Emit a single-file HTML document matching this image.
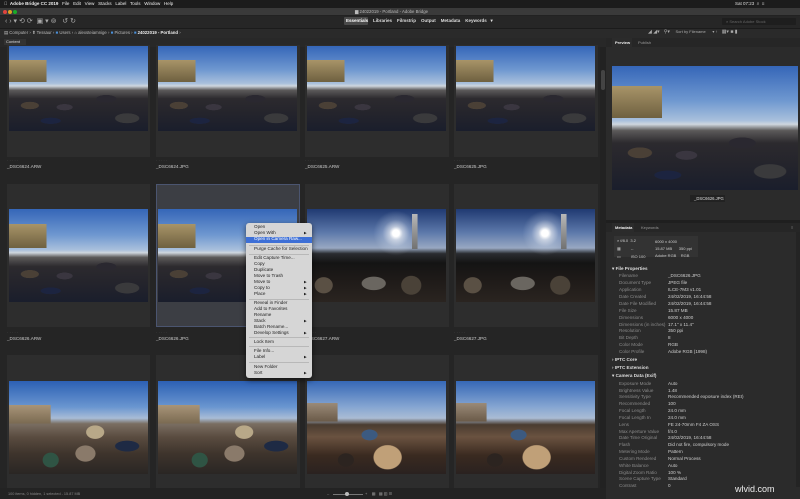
<!DOCTYPE html>
<html><head><meta charset="utf-8"><style>
*{margin:0;padding:0;box-sizing:border-box}
body{width:800px;height:499px;overflow:hidden;background:#232323;font-family:"Liberation Sans",sans-serif;color:#ccc;position:relative}
.a{position:absolute}
.t{position:absolute;font-size:4.6px;white-space:nowrap;line-height:1}
.cell{position:absolute;background:#2d2d2d}
.img{position:absolute}
.cliff{background:
 radial-gradient(ellipse 9% 6% at 15% 70%,#4a4036 0 70%,transparent 75%),
 radial-gradient(ellipse 8% 5% at 40% 72%,#3a3640 0 70%,transparent 75%),
 radial-gradient(ellipse 10% 6% at 70% 62%,#2a2830 0 70%,transparent 75%),
 radial-gradient(ellipse 12% 8% at 85% 85%,#3a3a3c 0 70%,transparent 75%),
 radial-gradient(ellipse 10% 5% at 30% 88%,#1c2440 0 70%,transparent 75%),
 linear-gradient(to bottom,#a89468,#6e6040) 0 22%/27% 26% no-repeat,
 linear-gradient(to bottom,#3566b8 0%,#6f98d0 28%,#a9c0dc 44%,#cfd6de 47%,#5c5a5a 52%,#2c2a2e 62%,#24242c 80%,#1a1e2c 100%)}
.light{background:
 linear-gradient(#b8b8b8,#707070) 79% 8%/4% 38% no-repeat,
 radial-gradient(circle at 64% 26%,#fff 0 3%,rgba(255,255,255,.6) 6%,rgba(220,230,245,.25) 12%,transparent 20%),
 radial-gradient(ellipse 9% 12% at 12% 82%,#5a5044 0 70%,transparent 75%),
 radial-gradient(ellipse 10% 14% at 75% 82%,#4a4238 0 70%,transparent 75%),
 radial-gradient(ellipse 12% 10% at 48% 80%,#6a6660 0 70%,transparent 75%),
 linear-gradient(to bottom,#203a72 0%,#5c78aa 25%,#98a8c2 42%,#2a2c30 48%,#141414 58%,#1e1a18 75%,#2a2420 100%)}
.peb{background:
 radial-gradient(ellipse 8% 11% at 30% 85%,#2f5444 0 70%,transparent 75%),
 radial-gradient(ellipse 10% 12% at 55% 78%,#8a7a6a 0 70%,transparent 75%),
 radial-gradient(ellipse 9% 10% at 62% 55%,#b8a888 0 70%,transparent 75%),
 radial-gradient(ellipse 12% 8% at 85% 70%,#1e2a44 0 70%,transparent 75%),
 linear-gradient(to bottom,#a89478,#7a6a52) 0 32%/30% 20% no-repeat,
 linear-gradient(to bottom,#2c60b4 0%,#6a96d0 28%,#a8bcd6 40%,#7a6e62 46%,#5a4c40 60%,#3e342c 78%,#2a2624 100%)}
.peb2{background:
 radial-gradient(ellipse 14% 18% at 58% 82%,#c0a078 0 70%,transparent 75%),
 radial-gradient(ellipse 8% 10% at 28% 85%,#2c2420 0 70%,transparent 75%),
 radial-gradient(ellipse 8% 8% at 45% 58%,#3c5a80 0 70%,transparent 75%),
 linear-gradient(to bottom,#9a8a78,#6a5a48) 0 30%/22% 20% no-repeat,
 linear-gradient(to bottom,#3668b6 0%,#86a6d2 28%,#aabcd4 40%,#4a3c30 47%,#6a5240 60%,#3a2a20 80%,#2a2220 100%)}
.menu{background:#d6d6d6;border-radius:3px;box-shadow:0 2px 6px rgba(0,0,0,.6)}
.menu .t{color:#222;font-size:4.6px;left:8px}
.menu .ar{left:58px;font-size:3.5px}
.sep{position:absolute;left:3px;right:3px;height:1px;background:#b8b8b8}
.m .t{color:#8a8a8a;left:12px}
.m .v{color:#cfcfcf;left:61px}
</style></head><body>
<div class="a" style="left:0;top:0;width:800px;height:8px;background:#1c1c1c"></div>
<div class="t" style="left:4px;top:2px;color:#eee;font-size:4.5px">&#63743;&nbsp;&nbsp;<b>Adobe Bridge CC 2019</b>&nbsp;&nbsp; File &nbsp; Edit &nbsp; View &nbsp; Stacks &nbsp; Label &nbsp; Tools &nbsp; Window &nbsp; Help</div>
<div class="t" style="left:735px;top:2px;color:#ddd;font-size:4.5px">Sat 07:23 &nbsp;⌕ &nbsp;≡</div>
<div class="a" style="left:0;top:8px;width:800px;height:8px;background:#3a3a3a;border-bottom:1px solid #222"></div>
<div class="a" style="left:3px;top:10px;width:4px;height:4px;border-radius:50%;background:#e0443e"></div>
<div class="a" style="left:8px;top:10px;width:4px;height:4px;border-radius:50%;background:#dea123"></div>
<div class="a" style="left:13px;top:10px;width:4px;height:4px;border-radius:50%;background:#1aab29"></div>
<div class="t" style="left:355px;top:10px;color:#bbb;font-size:4.3px">▆ 24022019 - Portland - Adobe Bridge</div>
<div class="a" style="left:0;top:16px;width:800px;height:12px;background:#262626"></div>
<div class="t" style="left:5px;top:18px;color:#aaa;font-size:7px">‹ › ▾ ⟲ ⟳ &nbsp;▣ ▾ ⊚ &nbsp; ↺ ↻</div>
<div class="a" style="left:344px;top:17px;width:24px;height:8px;background:#4a4a4a;border-radius:1px"></div>
<div class="t" style="left:346px;top:19px;color:#fff;font-size:4.5px"><b>Essentials</b></div>
<div class="t" style="left:373px;top:19px;color:#ddd;font-size:4.5px"><b>Libraries &nbsp;&nbsp; Filmstrip &nbsp;&nbsp; Output &nbsp;&nbsp; Metadata &nbsp;&nbsp; Keywords &nbsp; ▾</b></div>
<div class="a" style="left:722px;top:18px;width:74px;height:7px;background:#1e1e1e;border-radius:1px"></div>
<div class="t" style="left:726px;top:19.5px;color:#666;font-size:4px">⌕ Search Adobe Stock</div>
<div class="a" style="left:0;top:28px;width:800px;height:10px;background:#2a2a2a;border-top:1px solid #1b1b1b"></div>
<div class="t" style="left:4px;top:31px;color:#bbb;font-size:4.3px">▤ Computer › ⬆ Tessaur › <span style="color:#4a90d9">■</span> Users › ⌂ alexsteiamnige › <span style="color:#4a90d9">■</span> Pictures › <span style="color:#4a90d9">■</span> <b style="color:#eee">24022019 - Portland</b> ›</div>
<div class="t" style="left:648px;top:30px;color:#aaa;font-size:5px">◢ ◢▾ &nbsp; ⚲▾ &nbsp;&nbsp; <span style="font-size:4px">Sort by Filename &nbsp;&nbsp;&nbsp;&nbsp; ▾ ↑</span> &nbsp; ▦▾ ■ ▮</div>
<div class="a" style="left:0;top:38px;width:606px;height:9px;background:#282828"></div>
<div class="a" style="left:4px;top:39px;width:22px;height:6px;background:#333"></div>
<div class="t" style="left:6px;top:40px;color:#ddd;font-size:4px">Content</div>
<div class="a" style="left:0;top:47px;width:604px;height:441px;background:#252525"></div>
<div class="a" style="left:600px;top:47px;width:6px;height:441px;background:#222"></div>
<div class="a" style="left:601px;top:70px;width:4px;height:20px;background:#444;border-radius:2px"></div>

<div class="cell" style="left:7px;top:45px;width:143px;height:112px"></div>
<div class="cell" style="left:156px;top:45px;width:144px;height:112px"></div>
<div class="cell" style="left:305px;top:45px;width:144px;height:112px"></div>
<div class="cell" style="left:454px;top:45px;width:144px;height:112px"></div>
<div class="img cliff" style="left:9px;top:46px;width:139px;height:85px"></div>
<div class="img cliff" style="left:158px;top:46px;width:139px;height:85px"></div>
<div class="img cliff" style="left:307px;top:46px;width:139px;height:85px"></div>
<div class="img cliff" style="left:456px;top:46px;width:139px;height:85px"></div>
<div class="t" style="left:7px;top:159px;color:#555;font-size:4px">· · · · ·</div>
<div class="t" style="left:7px;top:165px;color:#ccc">_DSC6624.ARW</div>
<div class="t" style="left:156px;top:159px;color:#555;font-size:4px">· · · · ·</div>
<div class="t" style="left:156px;top:165px;color:#ccc">_DSC6624.JPG</div>
<div class="t" style="left:305px;top:159px;color:#555;font-size:4px">· · · · ·</div>
<div class="t" style="left:305px;top:165px;color:#ccc">_DSC6625.ARW</div>
<div class="t" style="left:454px;top:159px;color:#555;font-size:4px">· · · · ·</div>
<div class="t" style="left:454px;top:165px;color:#ccc">_DSC6625.JPG</div>

<div class="cell" style="left:7px;top:184px;width:143px;height:143px"></div>
<div class="cell" style="left:156px;top:184px;width:144px;height:143px;background:#3c3e44;border:1px solid #4b5570"></div>
<div class="cell" style="left:305px;top:184px;width:144px;height:143px"></div>
<div class="cell" style="left:454px;top:184px;width:144px;height:143px"></div>
<div class="img cliff" style="left:9px;top:209px;width:139px;height:93px"></div>
<div class="img cliff" style="left:158px;top:209px;width:139px;height:93px"></div>
<div class="img light" style="left:307px;top:209px;width:139px;height:93px"></div>
<div class="img light" style="left:456px;top:209px;width:139px;height:93px"></div>
<div class="t" style="left:7px;top:331px;color:#555;font-size:4px">· · · · ·</div>
<div class="t" style="left:7px;top:337px;color:#ccc">_DSC6626.ARW</div>
<div class="t" style="left:156px;top:331px;color:#555;font-size:4px">· · · · ·</div>
<div class="t" style="left:156px;top:337px;color:#ccc">_DSC6626.JPG</div>
<div class="t" style="left:305px;top:331px;color:#555;font-size:4px">· · · · ·</div>
<div class="t" style="left:305px;top:337px;color:#ccc">_DSC6627.ARW</div>
<div class="t" style="left:454px;top:331px;color:#555;font-size:4px">· · · · ·</div>
<div class="t" style="left:454px;top:337px;color:#ccc">_DSC6627.JPG</div>

<div class="cell" style="left:7px;top:355px;width:143px;height:133px"></div>
<div class="cell" style="left:156px;top:355px;width:144px;height:133px"></div>
<div class="cell" style="left:305px;top:355px;width:144px;height:133px"></div>
<div class="cell" style="left:454px;top:355px;width:144px;height:133px"></div>
<div class="img peb" style="left:9px;top:381px;width:139px;height:93px"></div>
<div class="img peb" style="left:158px;top:381px;width:139px;height:93px"></div>
<div class="img peb2" style="left:307px;top:381px;width:139px;height:93px"></div>
<div class="img peb2" style="left:456px;top:381px;width:139px;height:93px"></div>

<div class="a" style="left:0;top:488px;width:606px;height:11px;background:#232323"></div>
<div class="t" style="left:8px;top:493px;color:#888;font-size:3.8px">100 items, 0 hidden, 1 selected - 15.87 MB</div>
<div class="a" style="left:333px;top:494px;width:30px;height:1px;background:#777"></div>
<div class="a" style="left:345px;top:492px;width:4px;height:4px;border-radius:50%;background:#bbb"></div>
<div class="t" style="left:327px;top:492px;color:#999;font-size:4px">–</div>
<div class="t" style="left:365px;top:492px;color:#999;font-size:4px">+ &nbsp;&nbsp; ▦ &nbsp; ▦ ▥ ☰</div>

<div class="a" style="left:606px;top:38px;width:194px;height:461px;background:#2b2b2b"></div>
<div class="a" style="left:606px;top:38px;width:194px;height:9px;background:#262626"></div>
<div class="a" style="left:612px;top:38px;width:20px;height:9px;background:#2b2b2b"></div>
<div class="t" style="left:615px;top:40.5px;color:#eee;font-size:4px"><b>Preview</b></div>
<div class="t" style="left:638px;top:40.5px;color:#999;font-size:4px">Publish</div>
<div class="img cliff" style="left:612px;top:66px;width:186px;height:124px"></div>
<div class="a" style="left:690px;top:195px;width:35px;height:7px;background:#222"></div>
<div class="t" style="left:694px;top:197px;color:#ddd;font-size:4.2px">_DSC6626.JPG</div>
<div class="a" style="left:606px;top:220px;width:194px;height:3px;background:#1f1f1f"></div>
<div class="a" style="left:606px;top:223px;width:194px;height:9px;background:#262626"></div>
<div class="a" style="left:612px;top:223px;width:22px;height:9px;background:#2b2b2b"></div>
<div class="t" style="left:615px;top:226px;color:#eee;font-size:4px"><b>Metadata</b></div>
<div class="t" style="left:641px;top:226px;color:#999;font-size:4px">Keywords</div>
<div class="t" style="left:791px;top:226px;color:#888;font-size:4px">≡</div>
<div class="a" style="left:614px;top:236px;width:84px;height:21px;background:#333"></div>
<div class="t" style="left:617px;top:239px;color:#ccc;font-size:4px">⌕ f/8.0 &nbsp;3.2<br><br>▦ &nbsp;&nbsp;&nbsp;&nbsp;&nbsp;&nbsp;&nbsp; --<br><br>▭ &nbsp;&nbsp;&nbsp;&nbsp;&nbsp;&nbsp;&nbsp; ISO 100</div>
<div class="t" style="left:655px;top:239px;color:#ccc;font-size:4px;line-height:6.8px">6000 x 4000<br>15.87 MB &nbsp;&nbsp;&nbsp;&nbsp; 350 ppi<br>Adobe RGB &nbsp;&nbsp; RGB</div>
<div class="a" style="left:796px;top:232px;width:4px;height:255px;background:#242424"></div>

<div class="m">
<div class="t" style="left:612px;top:267px;color:#ddd"><b>▾ File Properties</b></div>
<div class="t" style="top:274px;left:619px">Filename</div><div class="v t" style="top:274px;left:668px">_DSC6626.JPG</div>
<div class="t" style="top:281px;left:619px">Document Type</div><div class="v t" style="top:281px;left:668px">JPEG file</div>
<div class="t" style="top:288px;left:619px">Application</div><div class="v t" style="top:288px;left:668px">ILCE-7M3 v1.01</div>
<div class="t" style="top:295px;left:619px">Date Created</div><div class="v t" style="top:295px;left:668px">24/02/2019, 16:44:58</div>
<div class="t" style="top:301.5px;left:619px">Date File Modified</div><div class="v t" style="top:301.5px;left:668px">24/02/2019, 16:44:58</div>
<div class="t" style="top:308.5px;left:619px">File Size</div><div class="v t" style="top:308.5px;left:668px">15.87 MB</div>
<div class="t" style="top:315.5px;left:619px">Dimensions</div><div class="v t" style="top:315.5px;left:668px">6000 x 4000</div>
<div class="t" style="top:322.5px;left:619px">Dimensions (in inches)</div><div class="v t" style="top:322.5px;left:668px">17.1" x 11.4"</div>
<div class="t" style="top:329px;left:619px">Resolution</div><div class="v t" style="top:329px;left:668px">350 ppi</div>
<div class="t" style="top:336px;left:619px">Bit Depth</div><div class="v t" style="top:336px;left:668px">8</div>
<div class="t" style="top:343px;left:619px">Color Mode</div><div class="v t" style="top:343px;left:668px">RGB</div>
<div class="t" style="top:349.5px;left:619px">Color Profile</div><div class="v t" style="top:349.5px;left:668px">Adobe RGB (1998)</div>
<div class="t" style="left:612px;top:357.5px;color:#ddd"><b>› IPTC Core</b></div>
<div class="t" style="left:612px;top:366px;color:#ddd"><b>› IPTC Extension</b></div>
<div class="t" style="left:612px;top:374px;color:#ddd"><b>▾ Camera Data (Exif)</b></div>
<div class="t" style="top:381.5px;left:619px">Exposure Mode</div><div class="v t" style="top:381.5px;left:668px">Auto</div>
<div class="t" style="top:388.5px;left:619px">Brightness Value</div><div class="v t" style="top:388.5px;left:668px">1.48</div>
<div class="t" style="top:395px;left:619px">Sensitivity Type</div><div class="v t" style="top:395px;left:668px">Recommended exposure index (REI)</div>
<div class="t" style="top:402px;left:619px">Recommended</div><div class="v t" style="top:402px;left:668px">100</div>
<div class="t" style="top:409px;left:619px">Focal Length</div><div class="v t" style="top:409px;left:668px">24.0 mm</div>
<div class="t" style="top:415.5px;left:619px">Focal Length In</div><div class="v t" style="top:415.5px;left:668px">24.0 mm</div>
<div class="t" style="top:422.5px;left:619px">Lens</div><div class="v t" style="top:422.5px;left:668px">FE 24-70mm F4 ZA OSS</div>
<div class="t" style="top:429.5px;left:619px">Max Aperture Value</div><div class="v t" style="top:429.5px;left:668px">f/4.0</div>
<div class="t" style="top:436px;left:619px">Date Time Original</div><div class="v t" style="top:436px;left:668px">24/02/2019, 16:44:58</div>
<div class="t" style="top:443px;left:619px">Flash</div><div class="v t" style="top:443px;left:668px">Did not fire, compulsory mode</div>
<div class="t" style="top:450px;left:619px">Metering Mode</div><div class="v t" style="top:450px;left:668px">Pattern</div>
<div class="t" style="top:456.5px;left:619px">Custom Rendered</div><div class="v t" style="top:456.5px;left:668px">Normal Process</div>
<div class="t" style="top:463.5px;left:619px">White Balance</div><div class="v t" style="top:463.5px;left:668px">Auto</div>
<div class="t" style="top:470.5px;left:619px">Digital Zoom Ratio</div><div class="v t" style="top:470.5px;left:668px">100 %</div>
<div class="t" style="top:477px;left:619px">Scene Capture Type</div><div class="v t" style="top:477px;left:668px">Standard</div>
<div class="t" style="top:484px;left:619px">Contrast</div><div class="v t" style="top:484px;left:668px">0</div>
</div>
<div class="t" style="left:735px;top:485px;color:#eee;font-size:9px">wlvid.com</div>

<div class="a menu" style="left:246px;top:223px;width:66px;height:155px">
<div class="t" style="top:2px">Open</div>
<div class="t" style="top:8px">Open With</div><div class="t ar" style="top:9px">▶</div>
<div class="a" style="left:0;top:13.5px;width:66px;height:6px;background:#3d6fd6"></div>
<div class="t" style="top:14.2px;color:#fff">Open in Camera Raw...</div>
<div class="sep" style="top:21.5px"></div>
<div class="t" style="top:24px">Purge Cache for Selection</div>
<div class="sep" style="top:31px"></div>
<div class="t" style="top:33px">Edit Capture Time...</div>
<div class="t" style="top:39px">Copy</div>
<div class="t" style="top:45px">Duplicate</div>
<div class="t" style="top:51px">Move to Trash</div>
<div class="t" style="top:57px">Move to</div><div class="t ar" style="top:58px">▶</div>
<div class="t" style="top:63px">Copy to</div><div class="t ar" style="top:64px">▶</div>
<div class="t" style="top:69px">Place</div><div class="t ar" style="top:70px">▶</div>
<div class="sep" style="top:75.5px"></div>
<div class="t" style="top:78px">Reveal in Finder</div>
<div class="t" style="top:84px">Add to Favorites</div>
<div class="t" style="top:89.5px">Rename</div>
<div class="t" style="top:95.5px">Stack</div><div class="t ar" style="top:96.5px">▶</div>
<div class="t" style="top:101.5px">Batch Rename...</div>
<div class="t" style="top:107.5px">Develop Settings</div><div class="t ar" style="top:108.5px">▶</div>
<div class="sep" style="top:114px"></div>
<div class="t" style="top:117px">Lock Item</div>
<div class="sep" style="top:123px"></div>
<div class="t" style="top:126px">File Info...</div>
<div class="t" style="top:132px">Label</div><div class="t ar" style="top:133px">▶</div>
<div class="sep" style="top:138.5px"></div>
<div class="t" style="top:142px">New Folder</div>
<div class="t" style="top:148px">Sort</div><div class="t ar" style="top:149px">▶</div>
</div>
</body></html>
